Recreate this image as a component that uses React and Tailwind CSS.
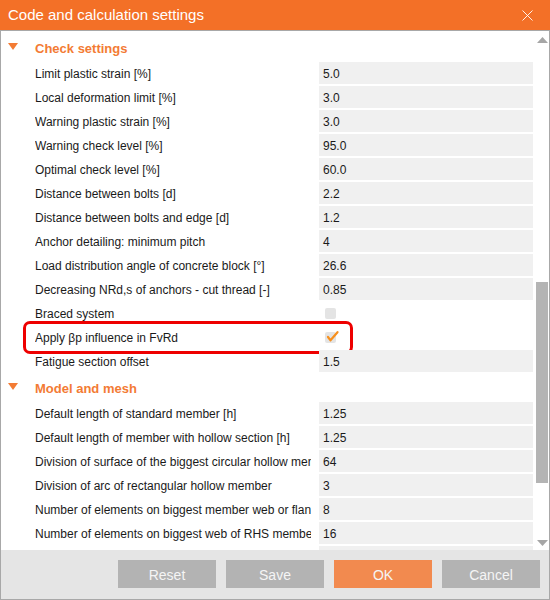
import React from "react";

const checkRows = [
  ["Limit plastic strain [%]", "5.0"],
  ["Local deformation limit [%]", "3.0"],
  ["Warning plastic strain [%]", "3.0"],
  ["Warning check level [%]", "95.0"],
  ["Optimal check level [%]", "60.0"],
  ["Distance between bolts [d]", "2.2"],
  ["Distance between bolts and edge [d]", "1.2"],
  ["Anchor detailing: minimum pitch", "4"],
  ["Load distribution angle of concrete block [°]", "26.6"],
  ["Decreasing NRd,s of anchors - cut thread [-]", "0.85"],
  ["Braced system", { check: false }],
  ["Apply βp influence in FvRd", { check: true, highlight: true }],
  ["Fatigue section offset", "1.5"],
];

const modelRows = [
  ["Default length of standard member [h]", "1.25"],
  ["Default length of member with hollow section [h]", "1.25"],
  ["Division of surface of the biggest circular hollow member", "64"],
  ["Division of arc of rectangular hollow member", "3"],
  ["Number of elements on biggest member web or flange", "8"],
  ["Number of elements on biggest web of RHS member", "16"],
  ["Number of elements on biggest web of CHS member", "8"],
];

function Header({ title }) {
  return (
    <div className="flex h-[28px] items-center pt-[3px]">
      <div className="flex w-[34px] pl-[7px] mb-[4px]">
        <svg width="10" height="7" viewBox="0 0 10 7">
          <polygon points="0,0 10,0 5,7" fill="#f37b34" />
        </svg>
      </div>
      <span className="text-[13px] font-bold text-[#f37b34]">{title}</span>
    </div>
  );
}

function Row({ label, value }) {
  const isCheck = typeof value === "object";
  return (
    <div className="relative flex h-[24px] items-center">
      <div className="w-[318px] pl-[34px] pt-[2px]">
        <div className="w-[276px] overflow-hidden whitespace-nowrap text-[12px] text-[#1a1a1a]">
          {label}
        </div>
      </div>
      {isCheck ? (
        <div className="flex h-[22px] w-[214px] items-center pl-[6px]">
          <div className="relative h-[11px] w-[11px] rounded-[2px] bg-[#e4e4e4]">
            {value.check && (
              <svg
                className="absolute left-[1px] top-[-2px]"
                width="14"
                height="13"
                viewBox="0 0 14 13"
              >
                <path
                  d="M2 7 L4.5 10.3 L11.5 2.2"
                  fill="none"
                  stroke="#f7901e"
                  strokeWidth="2.2"
                  strokeLinecap="round"
                  strokeLinejoin="round"
                />
              </svg>
            )}
          </div>
        </div>
      ) : (
        <div className="flex h-[22px] w-[214px] items-center bg-[#f0f0f0] pl-[4px] pt-[2px] text-[12px] text-[#1a1a1a]">
          {value}
        </div>
      )}
      {isCheck && value.highlight && (
        <div className="absolute left-[22px] top-[-4px] h-[33px] w-[330px] rounded-[7px] border-[3px] border-[#ee0000]" />
      )}
    </div>
  );
}

export default function App() {
  return (
    <div
      className="flex h-[600px] w-[550px] flex-col bg-white"
      style={{ fontFamily: '"Liberation Sans", Arial, sans-serif' }}
    >
      <div className="flex h-[30px] items-center justify-between bg-[#f37027] pl-[8px] pr-[17px]">
        <span className="text-[15px] text-white">Code and calculation settings</span>
        <svg width="11" height="11" viewBox="0 0 11 11">
          <path d="M0.5 0.5 L10.5 10.5 M10.5 0.5 L0.5 10.5" stroke="white" strokeWidth="0.9" />
        </svg>
      </div>
      <div className="flex flex-1 flex-col border-x border-b border-t border-[#a8a8a8]">
        <div className="flex h-[519px] overflow-hidden">
          <div className="w-[534px] overflow-hidden pt-[2px]">
            <Header title="Check settings" />
            {checkRows.map(([l, v]) => (
              <Row key={l} label={l} value={v} />
            ))}
            <Header title="Model and mesh" />
            {modelRows.map(([l, v]) => (
              <Row key={l} label={l} value={v} />
            ))}
          </div>
          <div className="flex w-[14px] flex-col">
            <div className="flex h-[17px] justify-center pl-[1px] pt-[6px]">
              <svg width="11" height="6" viewBox="0 0 11 6">
                <polygon points="0,6 11,6 5.5,0" fill="#a6a6a6" />
              </svg>
            </div>
            <div className="ml-[1px] mt-[234px] h-[201px] w-[12px] bg-[#b4b4b4]" />
            <div className="flex-1" />
            <div className="flex h-[17px] justify-center pl-[1px] pt-[7px]">
              <svg width="11" height="6" viewBox="0 0 11 6">
                <polygon points="0,0 11,0 5.5,6" fill="#a6a6a6" />
              </svg>
            </div>
          </div>
        </div>
        <div className="flex flex-1 items-start justify-end gap-[10px] bg-[#e5e5e5] pr-[9px] pt-[10px]">
          {["Reset", "Save", "OK", "Cancel"].map((b) => (
            <div
              key={b}
              className={`flex h-[28px] w-[98px] items-center justify-center pt-[2px] text-[14px] text-[#f5f5f5] ${
                b === "OK" ? "bg-[#f28a4f]" : "bg-[#b3b3b3]"
              }`}
            >
              {b}
            </div>
          ))}
        </div>
      </div>
    </div>
  );
}
